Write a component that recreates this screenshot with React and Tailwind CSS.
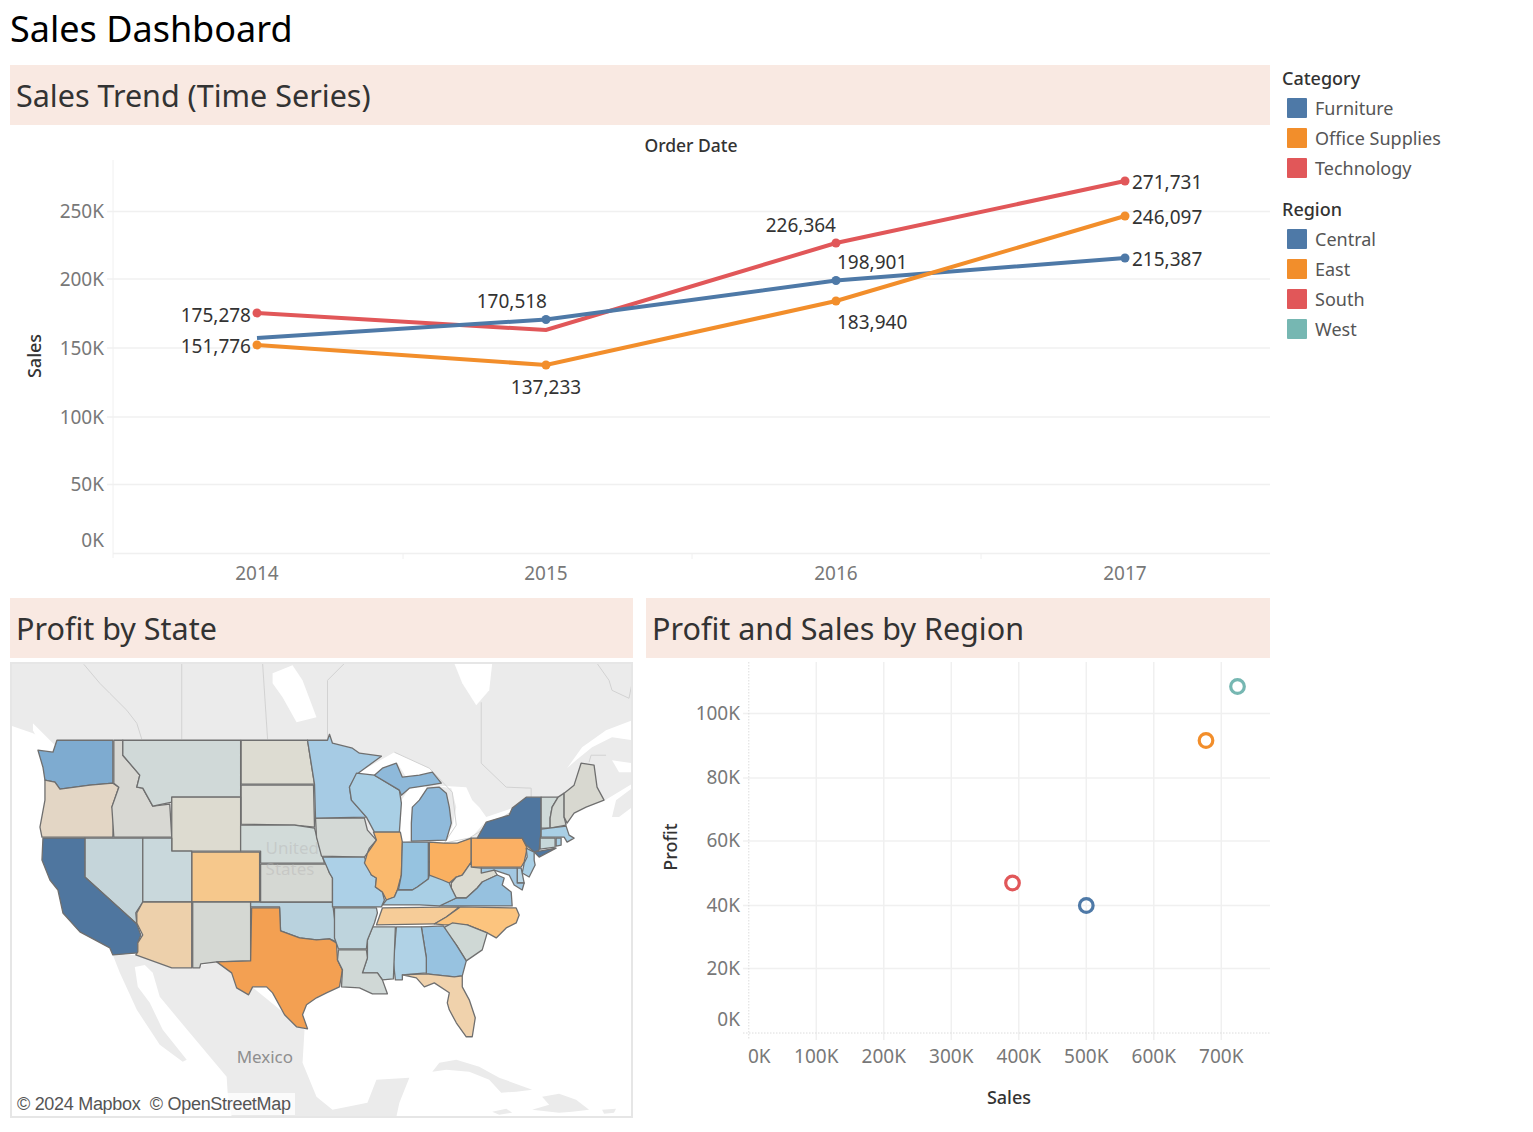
const BLUE = "#4e79a7", ORANGE = "#f28e2b", RED = "#e15759", TEAL = "#76b7b2";

const Title = ({ children }) => (
  <h2 className="h-[60px] bg-[#f9e9e2] pl-[6px] pt-[1px] flex items-center text-[30.5px] text-[#333] font-normal">{children}</h2>
);

const Legend = ({ title, items }) => (
  <div className="flex flex-col">
    <div className="h-[28px] pb-[2px] flex items-center text-[18px] font-medium text-[#333]">{title}</div>
    {items.map(([label, color]) => (
      <div key={label} className="h-[30px] flex items-center gap-[8px] pl-[5px] text-[18px] text-[#555]">
        <span className="w-[20px] h-[20px] rounded-[1px]" style={{ background: color }} />
        <span>{label}</span>
      </div>
    ))}
  </div>
);

const Label = ({ x, y, a = "start", children }) => (
  <text x={x} y={y} textAnchor={a} fontSize="19" fill="#333">{children}</text>
);
const Axis = ({ x, y, a = "end", children }) => (
  <text x={x} y={y} textAnchor={a} fontSize="19" fill="#787878">{children}</text>
);

function LineChart() {
  const xs = [257, 546, 836, 1125];
  const series = [
    [RED, [313, 330, 243, 181], [0, 2, 3]],
    [BLUE, [338, 319.5, 280.5, 258], [1, 2, 3]],
    [ORANGE, [345, 365, 301, 216], [0, 1, 2, 3]],
  ];
  return (
    <svg viewBox="10 125 1260 473" className="block w-full h-[473px]">
      <g stroke="#f0f0f0" strokeWidth="1.5">
        {[211.5, 279, 348, 417, 484.5].map((y) => <line key={y} x1="107" x2="1270" y1={y} y2={y} />)}
        <line x1="113" x2="1270" y1="553.5" y2="553.5" />
        <line x1="113" x2="113" y1="160" y2="558" strokeWidth="1" />
        {[403, 692, 981].map((x) => <line key={x} x1={x} x2={x} y1="553" y2="559" strokeWidth="1" />)}
      </g>
      {[["250K", 218], ["200K", 286], ["150K", 355], ["100K", 424], ["50K", 491], ["0K", 547]].map(([t, y]) => (
        <Axis key={t} x="104" y={y}>{t}</Axis>
      ))}
      {[["2014", 257], ["2015", 546], ["2016", 836], ["2017", 1125]].map(([t, x]) => (
        <Axis key={t} x={x} y="580" a="middle">{t}</Axis>
      ))}
      <text x="691" y="152" textAnchor="middle" fontSize="17.5" fontWeight="500" fill="#333">Order Date</text>
      <text transform="translate(41 356) rotate(-90)" textAnchor="middle" fontSize="18" fontWeight="500" fill="#333">Sales</text>
      {series.map(([c, ys, marks]) => (
        <g key={c}>
          <polyline points={ys.map((y, i) => `${xs[i]},${y}`).join(" ")} fill="none" stroke={c} strokeWidth="4" />
          {marks.map((i) => <circle key={i} cx={xs[i]} cy={ys[i]} r="4.5" fill={c} />)}
        </g>
      ))}
      <Label x="251" y="321.5" a="end">175,278</Label>
      <Label x="251" y="352.5" a="end">151,776</Label>
      <Label x="547" y="307.5" a="end">170,518</Label>
      <Label x="546" y="393.5" a="middle">137,233</Label>
      <Label x="836" y="231.5" a="end">226,364</Label>
      <Label x="837" y="268.5">198,901</Label>
      <Label x="837" y="328.5">183,940</Label>
      <Label x="1132" y="189">271,731</Label>
      <Label x="1132" y="223.5">246,097</Label>
      <Label x="1132" y="265.5">215,387</Label>
    </svg>
  );
}

function ScatterChart() {
  const gx = [816.3, 883.8, 951.3, 1018.8, 1086.3, 1153.8, 1221.3];
  return (
    <svg viewBox="646 662 624 456" className="block w-full h-[456px]">
      <g stroke="#f0f0f0" strokeWidth="1.5">
        {gx.map((x) => <line key={x} x1={x} x2={x} y1="662" y2="1040" />)}
        {[713.5, 778, 841, 905.5, 968.5].map((y) => <line key={y} x1="743" x2="1270" y1={y} y2={y} />)}
      </g>
      <g stroke="#dcdcdc" strokeWidth="1" strokeDasharray="1.5 1.5">
        <line x1="748.8" x2="748.8" y1="662" y2="1040" />
        <line x1="743" x2="1270" y1="1033" y2="1033" />
      </g>
      {[["100K", 720], ["80K", 784], ["60K", 847], ["40K", 912], ["20K", 975], ["0K", 1026]].map(([t, y]) => (
        <Axis key={t} x="740" y={y}>{t}</Axis>
      ))}
      <Axis x="748" y="1063" a="start">0K</Axis>
      {["100K", "200K", "300K", "400K", "500K", "600K", "700K"].map((t, i) => (
        <Axis key={t} x={gx[i]} y="1063" a="middle">{t}</Axis>
      ))}
      <text x="1009" y="1104" textAnchor="middle" fontSize="18" fontWeight="500" fill="#333">Sales</text>
      <text transform="translate(677 847) rotate(-90)" textAnchor="middle" fontSize="18" fontWeight="500" fill="#333">Profit</text>
      {[[RED, 1012.5, 883], [BLUE, 1086.3, 905.5], [ORANGE, 1206, 740.5], [TEAL, 1237.5, 686.5]].map(([c, x, y]) => (
        <circle key={c} cx={x} cy={y} r="6.8" fill="none" stroke={c} strokeWidth="3.2" />
      ))}
    </svg>
  );
}

const LAND = [
  "10,662 634,662 634,783 606,800 540,800 520,806 487,818 478,838 430,842 400,835 300,800 113,740 55,745 33,733 10,725",
  "100,740 430,740 430,850 100,850",
  "113,955 120,973 137,1010 160,1045 183,1062 187,1060 163,1030 150,1003 138,987 135,967 145,965 153,973 160,997 190,1033 227,1077 228,1093 232,1117 397,1117 400,1103 410,1078 377,1080 368,1103 333,1110 317,1097 303,1063 305,1030 250,985 217,962 192,968 172,968 136,955",
  "433,1072 440,1063 457,1060 480,1067 500,1078 533,1090 517,1092 502,1093 490,1080 470,1072 447,1070",
  "543,1097 560,1094 577,1100 590,1110 573,1112 560,1113 533,1110 550,1105",
  "493,1112 507,1109 513,1113 500,1115",
  "603,1110 617,1109 615,1113 605,1114",
  "613,817 617,800 633,788 633,807 620,817",
];
const WATER = [
  "33,723 50,740 55,745 50,748 37,738 33,730",
  "273,673 293,665 303,680 317,717 297,722 283,697 273,683",
  "455,663 493,663 490,690 477,705 463,683",
  "358,773 395,752 430,768 438,777 420,775 407,777 398,763 375,775",
  "433,785 452,788 457,807 453,827 443,840 448,845 470,840 485,823 510,815 513,808 487,817 480,807 473,800 467,787",
  "400,833 400,803 410,788 423,783 428,788 420,800 415,807 412,823 412,840 403,843",
  "568,768 583,747 607,730 633,720 633,740 613,737 593,747 577,760",
  "613,760 633,763 633,772 620,772",
];
const LINES = [
  "84,664 100,683 110,693 127,710 137,723 142,739",
  "182,663 182,739",
  "263,663 268,739",
  "345,663 328,680 328,739",
  "482,702 482,763 507,787 532,788 532,797",
  "598,663 610,680 613,690 630,698 633,683",
  "590,762 592,755 607,755",
  "395,752 430,768 453,792 457,825 445,843 470,838 510,813",
];
const STATES = [
  ["#7eabd0", "57,740 113,740 113,783 90,785 60,789 55,782 45,780 43,767 38,750 53,752"],
  ["#e3d6c5", "45,780 55,782 60,789 90,785 113,783 119,787 112,807 114,810 113,837 42,837 40,827 45,800"],
  ["#d8d8d3", "114,740 123,740 123,755 140,775 137,787 143,788 153,806 170,804 172,837 114,837 112,807 119,787 114,783"],
  ["#d0d9d8", "123,740 241,740 241,797 172,797 172,802 153,806 143,788 137,787 140,775 123,755"],
  ["#dddcd2", "241.5,740 308,740 315,784 241.5,784"],
  ["#dcdcd5", "241.5,785 314,785 315,827 295,825 241.5,824"],
  ["#dddbd0", "172,797 241,797 241,851 172,851"],
  ["#d2dbd9", "241,825 295,825 315,828 320,847 325,863 261,863 261,851 241,851"],
  ["#f6c88c", "192,852 260,852 260,902 192,902"],
  ["#c5d5da", "85,838 143,838 143,902 136,913 137,924 85,877"],
  ["#c9d8dc", "143,838 172,838 172,851 192,851 192,902 143,902"],
  ["#4f769f", "43,838 85,838 85,877 137,924 141,935 138,943 138,953 113,955 110,948 80,932 63,913 58,890 50,880 42,860"],
  ["#edd0ab", "143,902 192,902 192,968 172,968 136,955 138,952 138,943 143,935 137,923 137,913"],
  ["#d5d8d3", "193,902 251,902 251,961 217,962 201,964 200,968 193,968"],
  ["#b9d2de", "251,902 333,902 335,918 337,942 330,939 317,940 300,938 281,931 280,907 251,907"],
  ["#f3a052", "252,908 280,908 281,931 300,938 317,940 330,939 337,943 338,960 343,970 340,987 327,993 317,998 307,1005 303,1015 308,1029 297,1027 285,1015 273,993 267,987 253,987 249,995 237,988 232,973 217,962 251,961"],
  ["#d5d8d3", "261,864 327,864 330,873 333,878 333,902 261,902"],
  ["#d4d9d6", "316,818 365,818 368,830 377,840 370,848 368,853 365,857 322,856 317,837"],
  ["#a6cbe4", "308,740 328,740 330,734 333,743 353,748 360,753 382,756 360,772 357,775 350,787 352,800 367,817 316,818 315,784"],
  ["#a9cfe5", "357,773 375,775 400,790 402,803 400,832 375,832 367,817 352,800 350,787"],
  ["#8eb9da", "375,775 383,768 397,763 403,777 420,775 433,772 442,783 430,785 410,788 402,795 400,790"],
  ["#8fbadb", "413,807 420,800 428,788 440,787 447,793 450,807 452,823 447,840 412,841 412,823"],
  ["#acd0e7", "323,857 365,857 372,875 377,878 376,887 383,892 385,900 382,907 333,907 333,878 330,873"],
  ["#fab96d", "374,832 401,832 403,842 402,875 398,890 395,897 387,900 383,892 376,887 377,878 372,875 365,863 368,853 377,840"],
  ["#96c3e0", "403,842 429,842 429,879 418,887 413,890 399,890 402,875"],
  ["#fab060", "430,842 445,843 458,843 472,838 472,862 463,875 457,877 450,883 440,880 430,877"],
  ["#fbb064", "472,838 523,838 528,848 525,862 522,867 472,867"],
  ["#4f769f", "478,838 487,822 510,815 513,808 527,797 542,797 542,830 540,850 535,852 527,845 523,838"],
  ["#4f769f", "535,852 557,848 540,857"],
  ["#cfdad8", "542,797 559,797 553,807 551,818 551,828 542,828"],
  ["#d3d7d2", "559,797 565,793 565,817 567,825 551,828 551,818 553,807"],
  ["#d8d8d0", "565,793 575,785 582,763 595,765 598,787 605,800 587,807 575,813 568,823 565,817"],
  ["#a9cfe5", "542,829 567,826 570,835 575,838 568,842 565,837 542,837"],
  ["#c7d8da", "541,838 556,838 556,847 541,849"],
  ["#a9cfe5", "557,838 562,838 562,845 557,846"],
  ["#a9cfe5", "527,848 535,852 535,860 536,865 530,877 523,873 525,863 528,857"],
  ["#b9d6e6", "518,868 522,868 525,883 518,883"],
  ["#a3c8e2", "482,868 518,868 518,883 525,883 523,890 515,885 510,875 495,870 482,875"],
  ["#dcdbd1", "452,883 457,877 463,875 472,862 472,867 482,868 482,873 495,870 498,875 483,882 478,888 467,898 457,898 452,888"],
  ["#96c1df", "440,906 457,898 467,898 478,888 483,882 498,875 505,878 503,885 512,892 513,906"],
  ["#a9cfe5", "383,905 387,900 395,897 398,890 413,890 418,887 429,879 430,875 443,880 450,883 452,888 457,898 440,906 420,905"],
  ["#f6cc98", "383,908 460,907 447,917 435,924 377,925"],
  ["#fcc47e", "461,907 517,908 520,915 517,923 507,928 497,938 488,933 468,925 445,925 435,924 447,917"],
  ["#cfd8d5", "444,928 453,923 468,925 488,933 483,950 467,961 457,945"],
  ["#97c2e0", "422,927 444,926 457,945 467,961 463,976 455,977 427,974 427,958"],
  ["#b0d2e6", "397,927 422,927 427,958 427,973 403,975 403,980 396,980 394,962"],
  ["#c5d8de", "373,927 396,927 394,979 383,980 378,973 363,973 368,958 368,940"],
  ["#d0d8d6", "339,950 367,950 368,958 363,973 378,973 383,980 388,994 373,994 360,988 342,987 343,970 338,960"],
  ["#bed4dd", "335,908 377,908 378,913 375,923 368,940 367,949 339,949 335,938"],
  ["#f0d2ac", "403,975 427,974 455,977 463,976 463,987 470,1000 476,1018 473,1037 467,1037 457,1023 450,1010 448,1003 450,993 435,983 425,987 417,978"],
];

function MapPanel() {
  return (
    <div className="relative mt-[4px] h-[456px] border-2 border-[#e6e6e6] bg-white overflow-hidden">
      <svg viewBox="12 664 620 452" className="block w-full h-full">
        {LAND.map((p) => <polygon key={p} points={p} fill="#ebebeb" />)}
        {WATER.map((p) => <polygon key={p} points={p} fill="#ffffff" />)}
        {LINES.map((p) => <polyline key={p} points={p} fill="none" stroke="#d2d2d2" strokeWidth="1" />)}
        {STATES.map(([c, p]) => <polygon key={p} points={p} fill={c} stroke="#6f6f6f" strokeWidth="1.3" strokeLinejoin="round" />)}
        <text x="266" y="854" fontSize="17" fill="#b5b5b5" fillOpacity="0.45">United</text>
        <text x="266" y="875" fontSize="17" fill="#b5b5b5" fillOpacity="0.45">States</text>
        <text x="237" y="1063" fontSize="17" fill="#8f8f8f">Mexico</text>
      </svg>
      <div className="absolute left-[1px] bottom-[1px] h-[22px] px-[4px] flex items-center bg-white/80 text-[18px] tracking-[-0.3px] text-[#555] font-['Liberation_Sans',sans-serif] whitespace-nowrap">
        © 2024 Mapbox&nbsp;&nbsp;© OpenStreetMap
      </div>
    </div>
  );
}

export default function App() {
  return (
    <div className="h-[1132px] bg-white pl-[10px] flex gap-[12px] font-['Noto_Sans',sans-serif]">
      <main className="w-[1260px] shrink-0">
        <h1 className="h-[65px] pb-[8px] flex items-center text-[36px] text-black font-normal">Sales Dashboard</h1>
        <Title>Sales Trend (Time Series)</Title>
        <LineChart />
        <div className="flex gap-[13px]">
          <section className="w-[623px]">
            <Title>Profit by State</Title>
            <MapPanel />
          </section>
          <section className="w-[624px]">
            <Title>Profit and Sales by Region</Title>
            <div className="mt-[4px]"><ScatterChart /></div>
          </section>
        </div>
      </main>
      <aside className="pt-[65px] flex flex-col gap-[13px]">
        <Legend title="Category" items={[["Furniture", BLUE], ["Office Supplies", ORANGE], ["Technology", RED]]} />
        <Legend title="Region" items={[["Central", BLUE], ["East", ORANGE], ["South", RED], ["West", TEAL]]} />
      </aside>
    </div>
  );
}
